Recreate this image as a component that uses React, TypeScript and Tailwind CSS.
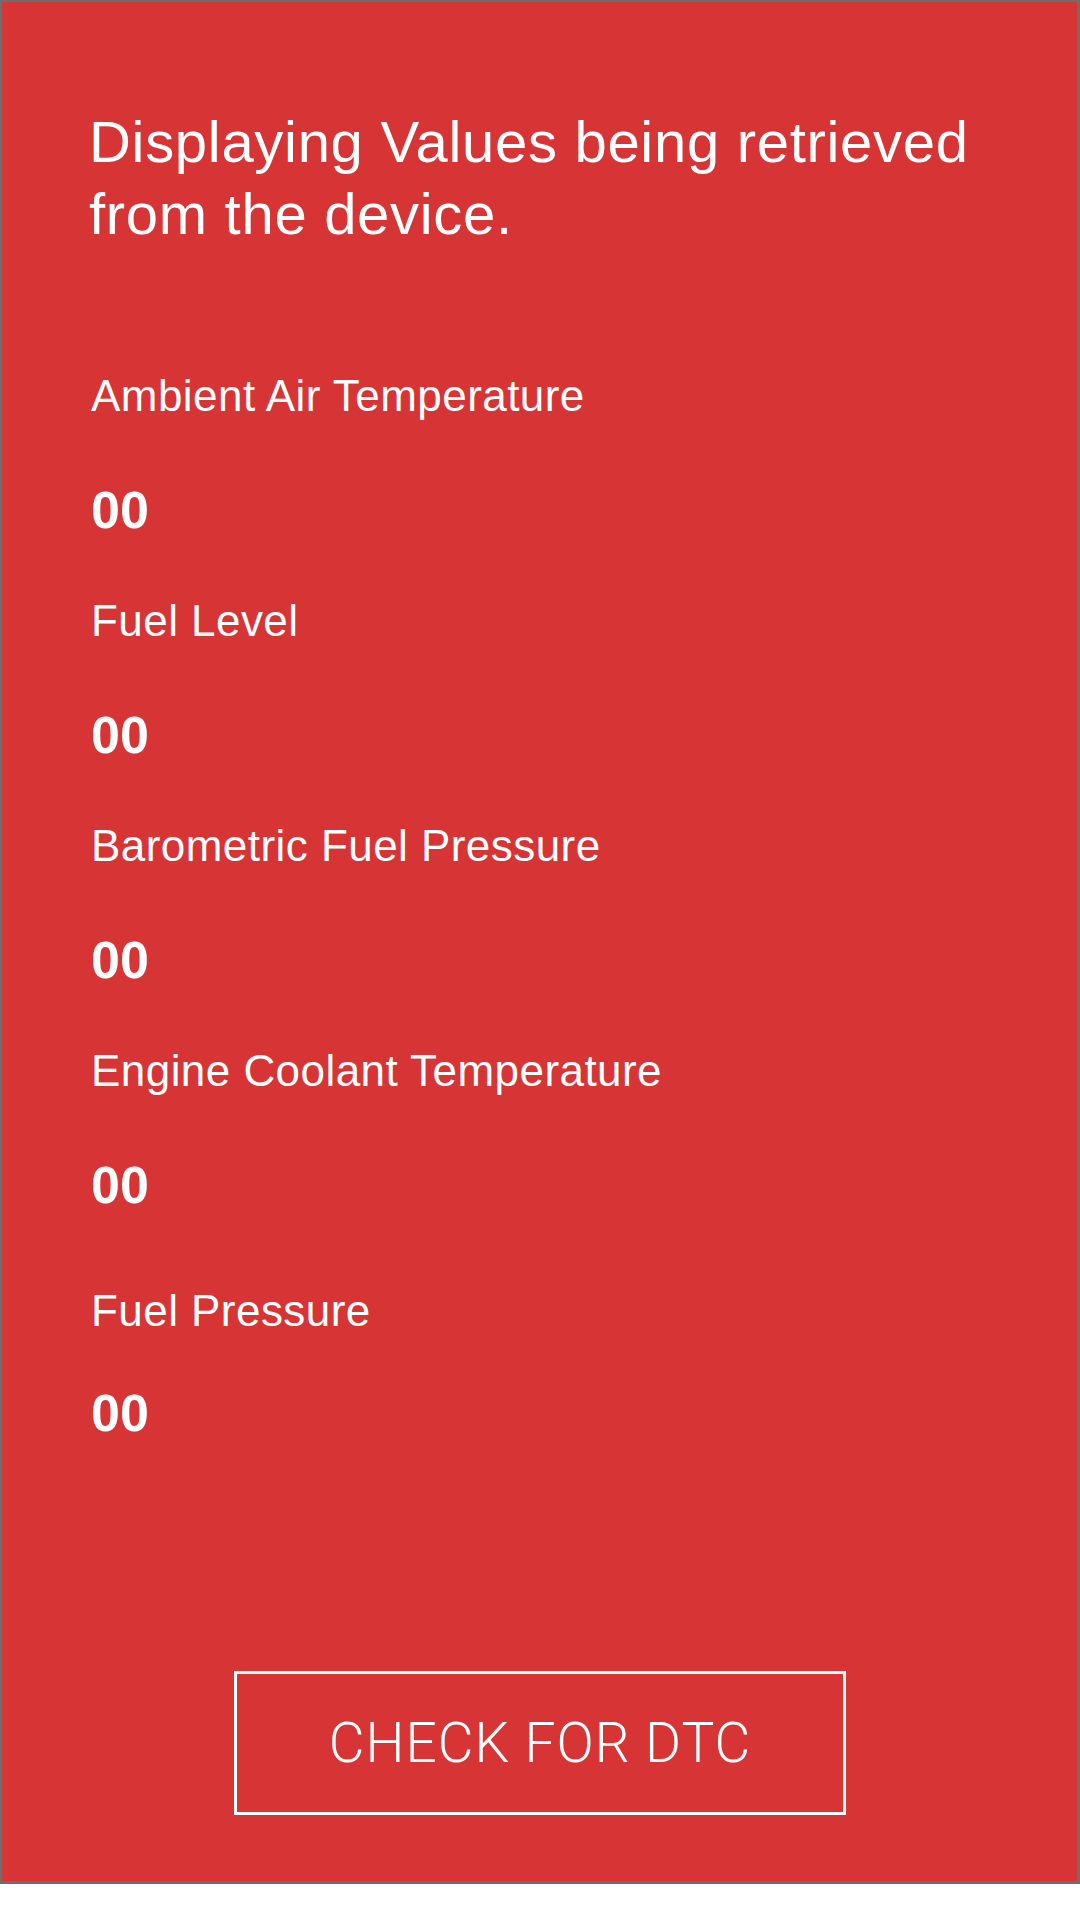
import React from "react";

const items = [
  { label: "Ambient Air Temperature", value: "00" },
  { label: "Fuel Level", value: "00" },
  { label: "Barometric Fuel Pressure", value: "00" },
  { label: "Engine Coolant Temperature", value: "00" },
];

export default function App() {
  return (
    <div
      className="w-[1080px] h-[1884px] bg-[#d63435] border-[#6d6d6d] border-t-2 border-l-2 border-r-[3px] border-b-[3px] flex flex-col text-white"
      style={{ fontFamily: '"Liberation Sans", Arial, sans-serif' }}
    >
      <div className="pl-[87px] pr-[40px] pt-[104px]">
        <h1 className="text-[58px] leading-[72px] font-normal tracking-[0.7px]">
          Displaying Values being retrieved
          <br />
          from the device.
        </h1>

        <div className="mt-[120px] flex flex-col gap-[55.5px] pl-[2px]">
          {items.map((it) => (
            <div key={it.label} className="flex flex-col">
              <div className="text-[44px] leading-[52px] tracking-[0.45px]">{it.label}</div>
              <div className="mt-[57.5px] text-[52px] leading-[60px] font-bold">{it.value}</div>
            </div>
          ))}
          <div className="flex flex-col mt-[15px]">
            <div className="text-[44px] leading-[52px] tracking-[0.45px]">Fuel Pressure</div>
            <div className="mt-[46px] text-[52px] leading-[60px] font-bold">00</div>
          </div>
        </div>
      </div>

      <div className="mt-auto mb-[66px] flex justify-center pl-[1px]">
        <button
          className="w-[612px] h-[144px] border-[3px] border-white flex items-center justify-center text-[55px] leading-none font-light tracking-[1px] text-white"
          style={{ fontFamily: 'Roboto, "Liberation Sans", sans-serif' }}
        >
          CHECK FOR DTC
        </button>
      </div>
    </div>
  );
}
